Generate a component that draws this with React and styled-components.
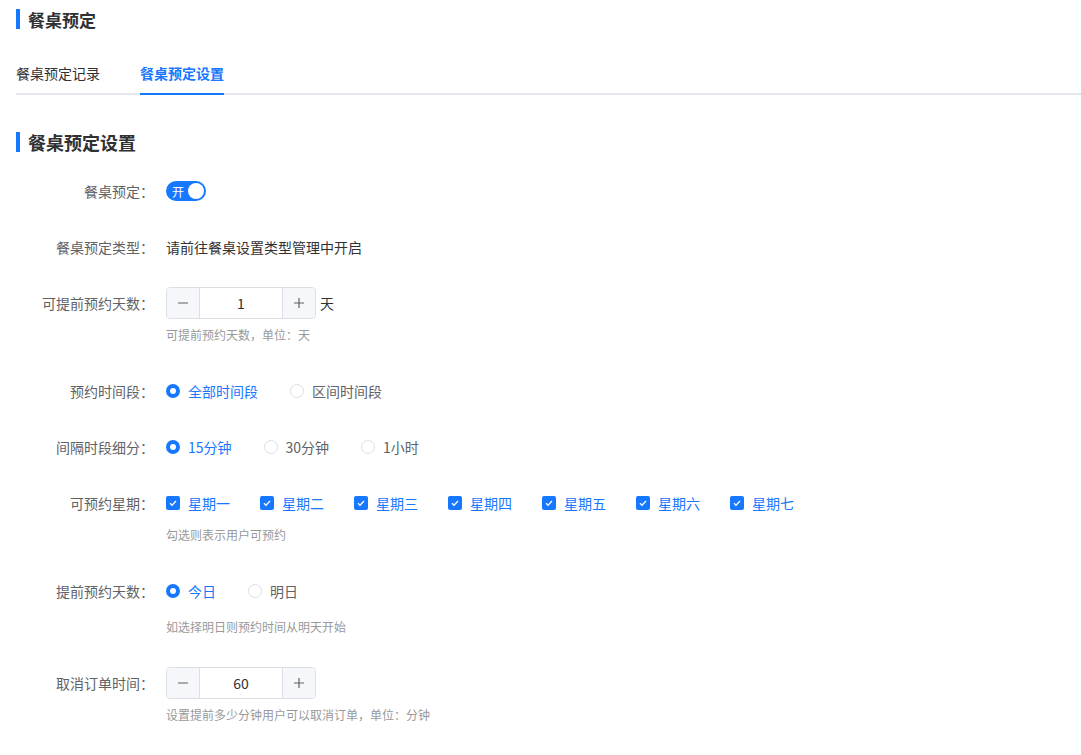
import React from "react";
import styled, { createGlobalStyle } from "styled-components";

const BLUE = "#1677ff";

const GlobalStyle = createGlobalStyle`
  body {
    margin: 0;
    background: #fff;
    font-family: "Noto Sans CJK SC", "Liberation Sans", sans-serif;
    color: #333;
  }
`;

const Page = styled.div`
  padding: 9px 0 0 16px;
`;

const Title = styled.h2`
  margin: 0;
  display: flex;
  align-items: center;
  height: 20px;
  font-size: ${(p) => p.$size || 17}px;
  font-weight: 700;
  color: #303133;
  &::before {
    content: "";
    width: 4px;
    height: 20px;
    background: ${BLUE};
    margin-right: 8px;
  }
`;

const Tabs = styled.div`
  display: flex;
  gap: 40px;
  margin-top: 24px;
  border-bottom: 2px solid #e4e7ed;
`;

const Tab = styled.div`
  height: 40px;
  line-height: 40px;
  font-size: 14px;
  color: ${(p) => (p.$active ? BLUE : "#303133")};
  font-weight: ${(p) => (p.$active ? 600 : 400)};
  position: relative;
  &::after {
    content: "";
    display: ${(p) => (p.$active ? "block" : "none")};
    position: absolute;
    left: 0;
    right: 0;
    bottom: -2px;
    height: 2px;
    background: ${BLUE};
  }
`;

const Section = styled.div`
  margin-top: 37px;
`;

const Form = styled.div`
  margin-top: 23px;
  margin-left: -16px;
`;

const Item = styled.div`
  display: flex;
  margin-bottom: 24px;
`;

const Label = styled.div`
  width: 154px;
  padding-right: 12px;
  text-align: right;
  font-size: 14px;
  line-height: 32px;
  color: #606266;
  flex-shrink: 0;
`;

const Content = styled.div`
  display: flex;
  flex-direction: column;
`;

const Line = styled.div`
  display: flex;
  align-items: center;
  min-height: 32px;
  font-size: 14px;
  color: #303133;
`;

const Help = styled.div`
  font-size: 12px;
  line-height: 20px;
  color: #999;
  margin-top: ${(p) => p.$top || 6}px;
  padding-bottom: 6px;
`;

const Switch = styled.div`
  width: 40px;
  height: 20px;
  border-radius: 10px;
  background: ${BLUE};
  display: flex;
  align-items: center;
  justify-content: space-between;
  padding: 0 2px 0 6px;
  box-sizing: border-box;
  color: #fff;
  font-size: 12px;
`;

const Knob = styled.span`
  width: 16px;
  height: 16px;
  border-radius: 50%;
  background: #fff;
`;

const NumberBox = styled.div`
  display: flex;
  width: 150px;
  height: 32px;
  box-sizing: border-box;
  border: 1px solid #dcdfe6;
  border-radius: 4px;
  overflow: hidden;
`;

const StepBtn = styled.div`
  width: 32px;
  background: #f5f7fa;
  display: flex;
  align-items: center;
  justify-content: center;
  color: #606266;
  border-${(p) => (p.$side === "left" ? "right" : "left")}: 1px solid #dcdfe6;
`;

const NumValue = styled.div`
  flex: 1;
  display: flex;
  align-items: center;
  justify-content: center;
  font-size: 14px;
  color: #303133;
`;

const Unit = styled.span`
  margin-left: 4px;
  font-size: 14px;
  color: #303133;
`;

const Option = styled.label`
  display: flex;
  align-items: center;
  margin-right: ${(p) => p.$gap}px;
  font-size: 14px;
  color: ${(p) => (p.$on ? BLUE : "#606266")};
`;

const RadioDot = styled.span`
  width: 14px;
  height: 14px;
  box-sizing: border-box;
  border-radius: 50%;
  border: ${(p) => (p.$on ? `4px solid ${BLUE}` : "1px solid #dcdfe6")};
  background: #fff;
  margin-right: 8px;
`;

const CheckBox = styled.span`
  width: 14px;
  height: 14px;
  border-radius: 2px;
  background: ${BLUE};
  margin-right: 8px;
  display: flex;
  align-items: center;
  justify-content: center;
`;

const Minus = () => (
  <svg width="14" height="14" viewBox="0 0 14 14">
    <path d="M2 7h10" stroke="#606266" strokeWidth="1.2" />
  </svg>
);

const Plus = () => (
  <svg width="14" height="14" viewBox="0 0 14 14">
    <path d="M2 7h10M7 2v10" stroke="#606266" strokeWidth="1.2" />
  </svg>
);

const Check = () => (
  <svg width="10" height="10" viewBox="0 0 10 10">
    <path d="M2 5.2l2 2 4-4.2" stroke="#fff" strokeWidth="1.3" fill="none" />
  </svg>
);

const NumberInput = ({ value }) => (
  <NumberBox>
    <StepBtn $side="left">
      <Minus />
    </StepBtn>
    <NumValue>{value}</NumValue>
    <StepBtn $side="right">
      <Plus />
    </StepBtn>
  </NumberBox>
);

const Radios = ({ items, active }) => (
  <Line>
    {items.map((t) => (
      <Option key={t} $gap={32} $on={t === active}>
        <RadioDot $on={t === active} />
        {t}
      </Option>
    ))}
  </Line>
);

const weekdays = ["星期一", "星期二", "星期三", "星期四", "星期五", "星期六", "星期七"];

export default function App() {
  return (
    <Page>
      <GlobalStyle />
      <Title>餐桌预定</Title>
      <Tabs>
        <Tab>餐桌预定记录</Tab>
        <Tab $active>餐桌预定设置</Tab>
      </Tabs>
      <Section>
        <Title $size={18}>餐桌预定设置</Title>
        <Form>
          <Item>
            <Label>餐桌预定：</Label>
            <Content>
              <Line>
                <Switch>
                  开<Knob />
                </Switch>
              </Line>
            </Content>
          </Item>
          <Item>
            <Label>餐桌预定类型：</Label>
            <Content>
              <Line>请前往餐桌设置类型管理中开启</Line>
            </Content>
          </Item>
          <Item>
            <Label>可提前预约天数：</Label>
            <Content>
              <Line>
                <NumberInput value={1} />
                <Unit>天</Unit>
              </Line>
              <Help>可提前预约天数，单位：天</Help>
            </Content>
          </Item>
          <Item>
            <Label>预约时间段：</Label>
            <Content>
              <Radios items={["全部时间段", "区间时间段"]} active="全部时间段" />
            </Content>
          </Item>
          <Item>
            <Label>间隔时段细分：</Label>
            <Content>
              <Radios items={["15分钟", "30分钟", "1小时"]} active="15分钟" />
            </Content>
          </Item>
          <Item>
            <Label>可预约星期：</Label>
            <Content>
              <Line>
                {weekdays.map((d) => (
                  <Option key={d} $gap={30} $on>
                    <CheckBox>
                      <Check />
                    </CheckBox>
                    {d}
                  </Option>
                ))}
              </Line>
              <Help>勾选则表示用户可预约</Help>
            </Content>
          </Item>
          <Item>
            <Label>提前预约天数：</Label>
            <Content>
              <Radios items={["今日", "明日"]} active="今日" />
              <Help $top={10}>如选择明日则预约时间从明天开始</Help>
            </Content>
          </Item>
          <Item>
            <Label>取消订单时间：</Label>
            <Content>
              <Line>
                <NumberInput value={60} />
              </Line>
              <Help>设置提前多少分钟用户可以取消订单，单位：分钟</Help>
            </Content>
          </Item>
        </Form>
      </Section>
    </Page>
  );
}
